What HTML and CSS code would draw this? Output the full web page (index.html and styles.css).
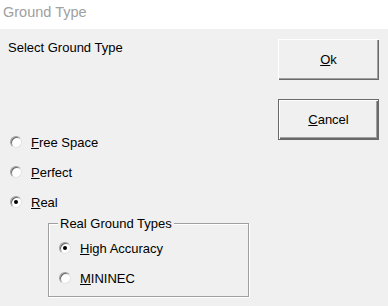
FILE: index.html
```html
<!DOCTYPE html>
<html lang="en">

<head>
	<meta charset="UTF-8">
	<meta name="viewport" content="width=device-width, initial-scale=1.0">
	<title>Ground Type</title>
	<link rel="stylesheet" href="styles.css">
</head>

<body>
	<div class="titlebar">Ground Type</div>
	<div class="dialog">
		<div class="left">
			<div class="caption">Select Ground Type</div>
			<div class="choices">
				<div class="radio-row">
					<span class="radio"></span>
					<span><u>F</u>ree Space</span>
				</div>
				<div class="radio-row">
					<span class="radio"></span>
					<span><u>P</u>erfect</span>
				</div>
				<div class="radio-row">
					<span class="radio checked"></span>
					<span><u>R</u>eal</span>
				</div>
			</div>
			<fieldset class="group">
				<legend>Real Ground Types</legend>
				<div class="radio-row">
					<span class="radio checked"></span>
					<span><u>H</u>igh Accuracy</span>
				</div>
				<div class="radio-row">
					<span class="radio"></span>
					<span><u>M</u>ININEC</span>
				</div>
			</fieldset>
		</div>
		<div class="buttons">
			<button class="btn"><u>O</u>k</button>
			<button class="btn default"><u>C</u>ancel</button>
		</div>
	</div>
</body>

</html>
```

FILE: styles.css
```css
* {
	box-sizing: border-box;
}

body {
	margin: 0;
	width: 388px;
	height: 306px;
	overflow: hidden;
	background: #f0f0f0;
	font-family: "Liberation Sans", Arial, sans-serif;
	font-size: 13px;
	color: #000;
}

.titlebar {
	height: 29px;
	background: #fff;
	color: #a0a0a0;
	font-size: 14.5px;
	line-height: 25px;
	padding-left: 3px;
}

.dialog {
	display: flex;
	justify-content: space-between;
}

.left {
	padding: 11px 0 0 8px;
}

.caption {
	line-height: 15px;
}

.choices {
	margin-top: 72px;
}

.radio-row {
	display: flex;
	align-items: center;
	height: 30px;
	padding-left: 2px;
}

.radio {
	width: 12px;
	height: 12px;
	margin-right: 9px;
	border-radius: 50%;
	background: #fff;
	border: 1px solid;
	border-color: #a0a0a0 #e3e3e3 #e3e3e3 #a0a0a0;
	box-shadow: inset 1px 1px 0 #696969;
	display: flex;
	align-items: center;
	justify-content: center;
}

.radio.checked::after {
	content: "";
	width: 4px;
	height: 4px;
	border-radius: 50%;
	background: #000;
}

.group {
	margin: -1px 0 0 40px;
	width: 201px;
	padding: 2px 0 3px 9px;
	border: 1px solid #a0a0a0;
	box-shadow: 1px 1px 0 #fff, inset 1px 1px 0 #fff;
}

.group legend {
	padding: 0 2px;
	line-height: 15px;
	background: #f0f0f0;
}

.group .radio-row {
	padding-left: 1px;
}

.buttons {
	display: flex;
	flex-direction: column;
	gap: 19px;
	padding: 10px 9px 0 0;
}

.btn {
	width: 101px;
	height: 41px;
	font-family: inherit;
	font-size: 13px;
	background: #f0f0f0;
	border: none;
	padding: 0;
	box-shadow: inset 1px 1px 0 #fff, inset -1px -1px 0 #696969, inset -2px -2px 0 #a0a0a0;
}

.btn.default {
	border: 1px solid #696969;
	box-shadow: inset 1px 1px 0 #fff, inset -1px -1px 0 #696969, inset -2px -2px 0 #a0a0a0;
}
```
